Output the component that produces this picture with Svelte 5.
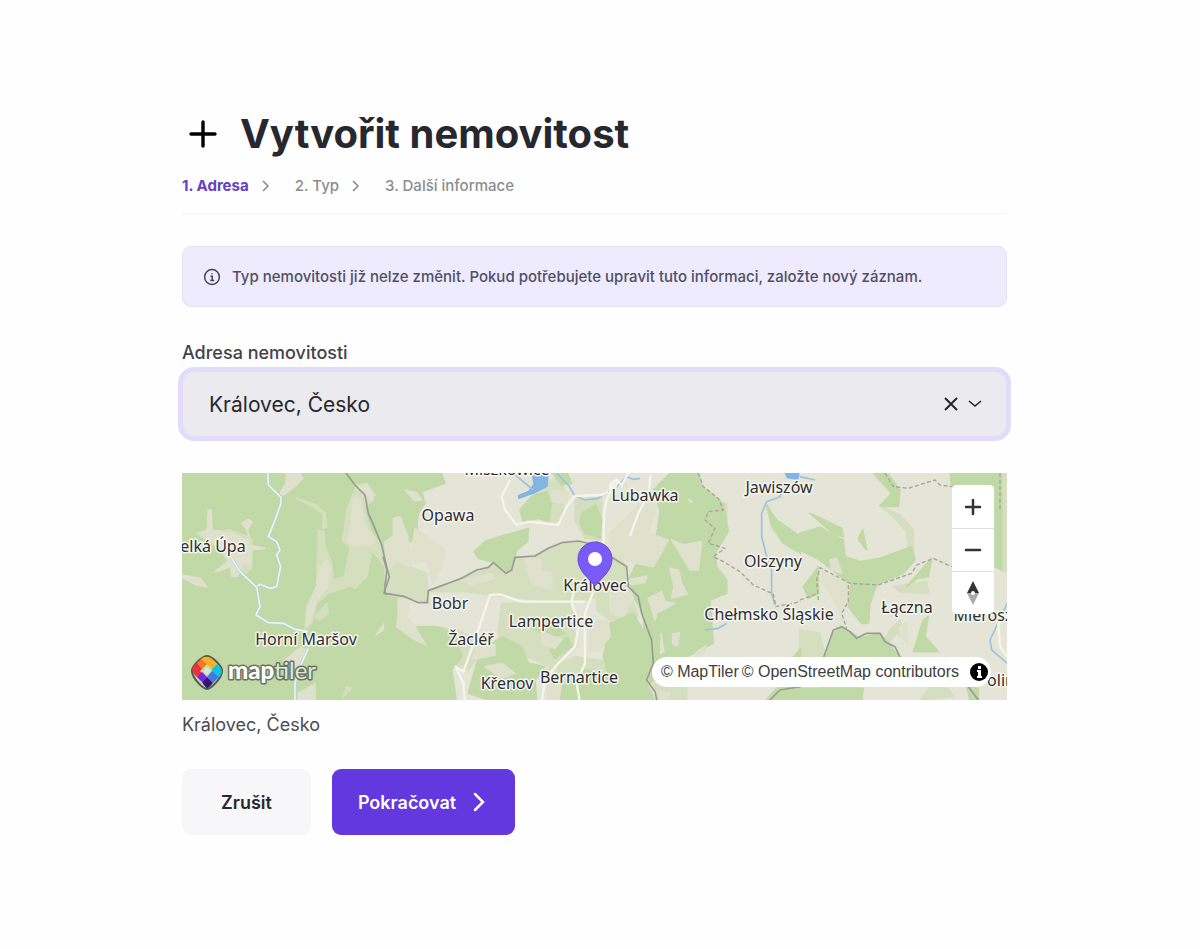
<script lang="ts">
  interface Sheet {
    x: number;
    wood: string[];
    pale: string[];
    clearing: string[];
    water: string[];
    river: string[];
    road: string[];
    border: string[];
    path: string[];
  }

  interface Place {
    name: string;
    x: number;
    y: number;
  }

  let address = $state("Královec, Česko");

  const steps = ["Adresa", "Typ", "Další informace"];
  const current = 0;

  // terrain sheets, drawn at three units to the pixel
  const sheets: Sheet[] = [
    {
      x: -2,
      wood: ["0,0 632,0 632,700 0,700"],
      pale: [
        "530,45 560,40 585,75 575,95 550,110 575,190 600,215 615,290 575,240 560,320 525,355 490,340 510,230 488,215 500,120",
        "70,185 150,180 215,205 215,290 200,310 165,310 120,235 50,190",
        "350,85 410,105 435,130 440,170 428,175 430,130 400,112",
        "415,180 432,185 435,230 455,280 460,330 500,320 520,345 445,370 410,400 395,460 375,480 380,410 410,350",
        "440,400 445,430 420,450 405,440",
        "500,650 490,680 515,655",
      ],
      clearing: [
        "320,9 360,9 368,25 345,50 310,75 300,70 318,40",
        "85,120 93,120 96,180 150,190 205,210 205,225 255,235 215,240 210,290 195,270 170,320 155,318 152,290 105,305 150,270 120,235 60,190 82,180",
        "185,160 205,148 216,155 203,180 208,200 197,175",
        "6,315 60,325 80,350 50,345 6,322",
        "535,48 560,46 580,75 575,92 557,72",
        "510,180 522,85 540,85 555,170 585,205 580,220 525,228 500,215",
        "420,290 440,270 452,300 440,355 405,400 390,455 378,470 384,410 410,350",
        "588,495 615,458 628,470 612,478",
        "310,575 360,533 380,540 350,610 325,600",
        "355,670 405,642 405,690 355,690",
      ],
      water: [],
      river: [
        "263,5 265,45 303,82 303,100 285,150 265,200 290,215 300,240 290,255 302,290 290,350 270,355 240,343 230,350 240,410 228,435 265,458 310,460 345,478 385,485",
        "155,265 180,305 230,352",
        "385,535 360,590 345,640 345,700",
      ],
      road: [],
      border: ["495,5 525,45 555,75 565,130 585,175 605,225 620,290 628,320 612,370 632,373"],
      path: [],
    },
    {
      x: 203,
      wood: [
        "0,0 165,0 180,40 150,50 110,65 120,100 100,130 95,165 105,205 75,215 60,180 45,140 25,150 20,200 0,215",
        "268,245 300,215 345,200 400,185 430,175 428,215 395,240 390,265 370,305 345,290 320,275 280,265",
        "0,378 40,385 35,430 60,440 90,470 150,470 210,490 230,560 200,600 215,700 0,700",
        "405,120 440,80 485,65 500,100 490,155 460,145 415,155",
        "500,5 545,5 560,40 530,45",
        "590,130 632,105 650,150 645,205 600,190 585,160",
        "285,545 350,500 410,530 430,580 480,590 450,630 455,700 340,700 250,670",
        "495,540 550,500 560,530 510,565",
        "530,650 600,600 700,620 700,700 520,700",
        "430,470 500,455 540,490 500,500",
      ],
      pale: [
        "0,215 50,230 75,290 125,310 130,400 0,372",
        "130,365 230,325 325,285 370,310 395,265 450,255 520,225 580,215 690,260 725,300 725,350 690,370 600,390 510,395 315,375 240,365",
        "340,480 350,400 560,400 575,530 500,590 350,530",
        "440,70 480,40 530,20 540,80 530,150 490,160",
        "150,470 220,480 300,530 250,600 220,590 150,540",
        "480,600 570,560 700,580 700,700 500,700",
        "570,90 650,80 650,210 600,205 570,150",
      ],
      clearing: [
        "0,215 30,195 70,215 90,280 125,270 145,340 170,290 180,240 125,200 90,175 75,290 30,270 10,300",
        "25,145 45,140 70,205 45,200 25,190",
        "60,60 95,68 110,90 88,92",
        "40,387 75,398 62,440 90,470 122,525 75,500 35,470 40,430",
        "230,330 320,310 330,325 260,345",
        "420,265 470,270 465,300 500,310 500,360 440,340",
        "300,590 350,580 390,610 350,625",
        "500,60 550,65 545,100 500,95",
        "280,510 330,525 330,555 260,570",
        "470,485 530,510 510,535 470,520",
        "485,610 510,595 530,640 520,700 490,700",
      ],
      water: ["438,5 492,5 488,50 450,70 400,88 398,76 430,62 445,42"],
      river: ["385,10 445,60", "515,9 550,45 570,78 600,90 640,85 670,65"],
      road: [
        "375,30 350,80 360,120 395,165 430,155 520,165 545,110 570,78 650,75 680,60",
        "275,495 315,375 345,373 410,395 560,395 600,395",
        "240,700 235,640 212,590 235,605 275,495",
        "470,700 480,630 520,580 570,530 582,460 560,400 568,350",
        "585,700 575,640 600,580 600,430 625,365",
      ],
      border: [
        "-6,260 6,300 0,345 0,370 60,380 100,398 127,398 130,362 230,325 275,300 310,292 325,278 363,310 380,300 390,262 450,258 490,235 530,218 580,213 632,225",
      ],
      path: [],
    },
    {
      x: 408,
      wood: [
        "190,60 240,10 325,5 335,50 400,100 415,185 375,250 380,290 410,330 410,370 360,390 370,520 290,560 205,620 180,640 165,530 160,430 130,380 110,340 145,270 190,290 235,220 200,200 210,120",
        "530,105 560,150 632,200 632,250 580,220 545,170",
        "60,460 130,430 170,500 190,590 165,630 200,700 80,700 40,560",
        "595,580 632,535 632,570",
        "520,700 560,655 632,650 632,700",
      ],
      pale: [
        "20,370 120,370 145,440 60,450 20,420",
        "390,100 410,100 410,170 380,240 355,200 350,130",
        "45,230 90,262 110,290 100,310 60,270",
        "190,640 290,600 290,700 205,700",
      ],
      clearing: [
        "60,190 175,80 200,110 175,190 235,210 190,290 140,280 90,265 60,250",
        "245,210 280,225 335,215 325,300 300,300 265,240",
        "240,295 265,300 275,340 292,372 245,385 252,350",
        "175,385 215,365 225,395 255,400 200,430 195,450",
        "110,330 170,318 165,338 125,343",
        "60,365 120,350 130,385 100,440 60,430",
        "0,475 25,450 55,455 60,500 25,545 -5,540",
        "213,490 222,545 212,550",
        "248,492 268,488 263,528 248,522",
        "320,545 348,528 343,550 310,570",
        "295,87 308,95 300,96",
        "210,665 240,668 225,700 210,700",
      ],
      water: ["582,5 630,5 625,30 590,25"],
      river: [
        "55,65 80,50 110,20 130,28 150,25",
        "590,45 570,80 530,95 515,130 515,200 530,260 545,300 545,370 555,405",
        "345,480 385,475 410,460",
      ],
      road: [
        "75,30 50,90 42,130 40,230",
        "182,15 175,75 145,130 120,198",
        "60,60 62,40 80,30 95,45 115,9",
        "68,68 85,30",
      ],
      border: ["20,215 65,262 110,290 115,350 145,380 155,430 185,510 190,580 170,630 195,665 203,700", "540,690 570,660 632,650"],
      path: [
        "325,9 340,50 385,85 400,120 355,125 345,150 375,175 355,220 405,235 370,260 400,275 450,305 490,345 550,372 558,410 632,395",
      ],
    },
    {
      x: 618,
      wood: [
        "220,9 265,12 300,60 295,110 240,108 275,70",
        "450,5 605,5 605,300 585,290 585,45 455,50",
        "0,190 60,172 130,210 135,260 180,275 240,265 335,230 345,270 310,310 230,345 210,400 205,460 185,460 145,410 150,340 90,295 60,270 0,240",
        "30,130 125,175 130,200 100,190",
        "10,350 55,290 55,370 25,385",
        "320,350 395,265 385,320 350,325",
        "75,565 100,490 125,470 180,505 240,490 265,520 300,565",
        "370,450 385,440 375,500 415,545 340,545",
        "175,205 188,180 200,240 180,215",
        "0,655 190,655 185,690 0,690",
        "500,650 535,655 535,690 510,690",
      ],
      pale: [
        "605,5 622,5 622,310 605,300",
        "245,110 300,135 340,180 340,240 325,235 320,185 280,140",
        "270,480 300,450 315,510 290,490 265,520 255,510",
        "280,350 380,335 385,370 300,365",
        "0,480 60,490 75,560 0,560",
        "390,650 440,650 460,680 360,690",
        "60,590 180,655 170,690 60,690",
      ],
      clearing: ["90,270 110,265 125,310 95,300", "65,305 148,342 142,395 120,425 92,370 65,335", "300,470 318,458 322,518 302,500"],
      water: [],
      river: ["622,400 570,510 575,540 622,580", "0,20 45,30"],
      road: ["622,430 595,460 600,530 622,560"],
      border: ["70,565 100,480 125,470 150,485 170,505 200,490 240,490 255,515 285,530 302,565", "505,650 535,690"],
      path: [
        "255,9 280,50 325,55 405,30 420,45 455,50",
        "55,390 50,330 60,293 150,340 235,345 335,310 350,285 400,265 455,290",
        "145,345 145,395 125,430 140,475",
        "0,390 55,370",
        "600,10 600,120",
      ],
    },
  ];

  const places: Place[] = [
    { name: "Miszkowice", x: 325, y: 2 },
    { name: "Lubawka", x: 463, y: 28 },
    { name: "Jawiszów", x: 597, y: 20 },
    { name: "Opawa", x: 266, y: 48 },
    { name: "elká Úpa", x: 31, y: 79 },
    { name: "Olszyny", x: 591, y: 94 },
    { name: "Královec", x: 413, y: 118 },
    { name: "Bobr", x: 268, y: 136 },
    { name: "Chełmsko Śląskie", x: 587, y: 147 },
    { name: "Łączna", x: 725, y: 140 },
    { name: "Mieroszów", x: 812, y: 148 },
    { name: "Lampertice", x: 369, y: 154 },
    { name: "Horní Maršov", x: 124, y: 172 },
    { name: "Žacléř", x: 289, y: 172 },
    { name: "Bernartice", x: 397, y: 210 },
    { name: "Křenov", x: 325, y: 216 },
    { name: "olin", x: 819, y: 213 },
  ];
</script>

<main class="page">
  <header class="heading">
    <svg class="plus" viewBox="0 0 42 42" aria-hidden="true">
      <path d="M21 9v24M9 21h24" />
    </svg>
    <h1>Vytvořit nemovitost</h1>
  </header>

  <ol class="steps">
    {#each steps as step, i (step)}
      <li class:active={i === current}>
        {i + 1}. {step}
        {#if i < steps.length - 1}
          <svg class="step-arrow" viewBox="0 0 10 12" aria-hidden="true"><path d="M2 1l5 5-5 5" /></svg>
        {/if}
      </li>
    {/each}
  </ol>

  <div class="notice" role="note">
    <svg viewBox="0 0 18 18" aria-hidden="true">
      <circle cx="9" cy="9" r="7.4" />
      <path d="M7.5 8.2h1.7v4.1M7.2 12.4h4M9 5.2v1" />
    </svg>
    <p>Typ nemovitosti již nelze změnit. Pokud potřebujete upravit tuto informaci, založte nový záznam.</p>
  </div>

  <label for="address">Adresa nemovitosti</label>
  <div class="select-wrap">
    <select id="address" bind:value={address}>
      <option value="Královec, Česko">Královec, Česko</option>
      <option value=""></option>
    </select>
    <button type="button" class="clear" aria-label="Vymazat" onclick={() => (address = "")}>
      <svg viewBox="0 0 16 16" aria-hidden="true"><path d="M2 2l12 12M14 2L2 14" /></svg>
    </button>
    <svg class="chevron" viewBox="0 0 14 10" aria-hidden="true"><path d="M1 2l6 5 6-5" /></svg>
  </div>

  <div class="map">
    <svg class="terrain" viewBox="0 0 825 227" preserveAspectRatio="xMidYMid slice">
      {#each sheets as s (s.x)}
        <g transform="translate({s.x} -3) scale(0.3333)">
          {#if s.x < 0}
            {#each s.wood as points}<polygon class="wood" {points} />{/each}
          {/if}
          {#each s.pale as points}<polygon class="pale" {points} />{/each}
        </g>
      {/each}
      {#each sheets as s (s.x)}
        <g transform="translate({s.x} -3) scale(0.3333)">
          {#if s.x > 0}
            {#each s.wood as points}<polygon class="wood" {points} />{/each}
          {/if}
          {#each s.clearing as points}<polygon class="clearing" {points} />{/each}
          {#each s.water as points}<polygon class="water" {points} />{/each}
        </g>
      {/each}
      {#each sheets as s (s.x)}
        <g transform="translate({s.x} -3) scale(0.3333)">
          {#each s.river as points}
            {#if s.x < 0}<polyline class="bank" {points} />{/if}
            <polyline class="river" class:light={s.x < 0} {points} />
          {/each}
          {#each s.road as points}<polyline class="road" {points} />{/each}
          {#each s.path as points}<polyline class="path" {points} />{/each}
          {#each s.border as points}<polyline class="border" {points} />{/each}
        </g>
      {/each}
      {#each places as p (p.name)}
        <text class="place" x={p.x} y={p.y} text-anchor="middle">{p.name}</text>
      {/each}
      <path class="pin" d="M396 86a17 17 0 0 1 34 0c0 6-3 11-6 15l-11 12-11-12c-3-4-6-9-6-15z" />
      <circle cx="413" cy="86" r="7" fill="#fff" />
    </svg>

    <a class="logo" href="#maptiler" aria-label="MapTiler">
      <svg viewBox="0 0 130 40">
        <path class="logo-edge" d="M17 3C21 3 32 12 32 18C32 25 21 36 17 36C13 36 2 25 2 18C2 12 13 3 17 3Z" />
        <path fill="#fbb01e" d="M11 6C15 3 18 3 22 6L27 11L22 16L17 11Z" />
        <path fill="#f9761c" d="M11 6L17 11L12 16L7 10Z" />
        <path fill="#ee2f3c" d="M7 10L12 16L10 18L12 20L7 24C2 20 1 16 4 12Z" />
        <path fill="#12c3da" d="M27 11C33 16 33 20 29 24L22 18L22 16Z" />
        <path fill="#3f78e8" d="M22 18L29 24L23 30L17 24Z" />
        <path fill="#7a22ea" d="M7 24L12 19L17 24L12 29Z" />
        <path fill="#35157d" d="M12 29L17 24L23 30C17 37 17 37 12 29Z" />
        <path fill="#dce7d2" d="M17 14L21 18L17 22L13 18Z" />
        <text x="38" y="26"><tspan class="bold">map</tspan><tspan class="thin">tiler</tspan></text>
      </svg>
    </a>

    <div class="controls">
      <button type="button" aria-label="Přiblížit">
        <svg viewBox="0 0 20 20"><path d="M10 3v14M3 10h14" /></svg>
      </button>
      <button type="button" aria-label="Oddálit">
        <svg viewBox="0 0 20 20"><path d="M3 10h14" /></svg>
      </button>
      <button type="button" aria-label="Sever nahoru">
        <svg class="compass" viewBox="0 0 14 24">
          <path fill="#333" d="M7 0l6 12H9a2 2 0 0 0-4 0H1z" />
          <path fill="#aaa" d="M1 12h4a2 2 0 0 0 4 0h4L7 24z" />
        </svg>
      </button>
    </div>

    <div class="attribution">
      <a href="#copyright">© MapTiler</a>
      <a href="#osm">© OpenStreetMap contributors</a>
      <svg viewBox="0 0 20 20" aria-hidden="true">
        <circle cx="10" cy="10" r="9" />
        <path fill="#fff" d="M9 4h3v3H9zM8 8h4v6h1v2H8v-2h1v-4H8z" />
      </svg>
    </div>
  </div>
  <p class="caption">Královec, Česko</p>

  <div class="actions">
    <button type="button" class="cancel">Zrušit</button>
    <button type="button" class="next">
      Pokračovat
      <svg viewBox="0 0 14 20" aria-hidden="true"><path d="M3 2l8 8-8 8" /></svg>
    </button>
  </div>
</main>

<style>
  :global(body) {
    background: #fefefe;
  }

  .page {
    padding: 108px 193px 64px 182px;
    font-family: Inter, "Noto Sans", sans-serif;
    color: #27272f;
  }

  button {
    font-family: inherit;
    border: none;
    padding: 0;
    cursor: pointer;
  }

  svg {
    flex-shrink: 0;
    fill: none;
  }

  .heading {
    display: flex;
    align-items: center;
    gap: 16px;
  }

  .plus {
    width: 42px;
    height: 42px;
    stroke: #000;
    stroke-width: 3.4;
    stroke-linecap: round;
  }

  h1 {
    margin: 0;
    font-size: 40px;
    line-height: 52px;
    font-weight: 700;
  }

  .steps {
    display: flex;
    gap: 24px;
    margin: 14px 0 32px;
    padding: 0 0 15px;
    list-style: none;
    border-bottom: 1px solid #f4f4f6;
    font-size: 15px;
    line-height: 24px;
    font-weight: 500;
    color: #8c8c91;
  }

  .steps li {
    display: flex;
    align-items: center;
    gap: 12px;
  }

  .steps .active {
    color: #6540c8;
    font-weight: 700;
  }

  .step-arrow {
    width: 10px;
    height: 12px;
    stroke: #88888d;
    stroke-width: 1.5;
  }

  .notice {
    display: flex;
    align-items: center;
    gap: 11px;
    padding: 17px 20px;
    border: 1px solid #e4e1f0;
    border-radius: 9px;
    background: #eeebfe;
    color: #514e64;
    font-size: 15px;
    line-height: 25px;
    font-weight: 500;
  }

  .notice p {
    margin: 0;
  }

  .notice svg {
    width: 18px;
    height: 18px;
    stroke: #46435a;
    stroke-width: 1.5;
  }

  label {
    display: block;
    margin: 34px 0 6px;
    font-size: 18px;
    line-height: 24px;
    font-weight: 500;
    color: #424248;
  }

  .select-wrap {
    position: relative;
  }

  select {
    display: block;
    width: 100%;
    height: 66px;
    padding: 0 80px 0 26px;
    appearance: none;
    border: 1px solid #e2dcf8;
    border-radius: 12px;
    outline: none;
    box-shadow: 0 0 0 4px #e2dcfa;
    background: #ebeaef;
    font-family: inherit;
    font-size: 21px;
    color: #27272f;
  }

  .clear {
    position: absolute;
    top: 25px;
    right: 48px;
    width: 16px;
    height: 16px;
    background: transparent;
  }

  .clear svg {
    display: block;
    stroke: #27272f;
    stroke-width: 2;
  }

  .chevron {
    position: absolute;
    top: 28px;
    right: 25px;
    width: 14px;
    height: 10px;
    stroke: #27272f;
    stroke-width: 1.6;
    pointer-events: none;
  }

  .map {
    position: relative;
    height: 227px;
    margin-top: 36px;
    overflow: hidden;
    background: #e4e4d7;
  }

  .terrain {
    display: block;
    width: 100%;
    height: 100%;
  }

  polygon {
    stroke-width: 5;
    stroke-linejoin: round;
  }

  .wood {
    fill: #c1d9a7;
    stroke: #c1d9a7;
  }

  .pale {
    fill: #d5dfbf;
    stroke: #d5dfbf;
  }

  .clearing {
    fill: #dfe1cd;
    stroke: #dfe1cd;
  }

  .water {
    fill: #82b5e4;
  }

  .river {
    stroke: #9bc3df;
    stroke-width: 5;
  }

  .river.light {
    stroke: #eaf6f1;
    stroke-width: 5;
  }

  .bank {
    stroke: #b5d3cf;
    stroke-width: 9;
  }

  .road {
    stroke: #f5f5ec;
    stroke-width: 7;
  }

  .border {
    stroke: #989d92;
    stroke-width: 5;
  }

  .path {
    stroke: #a3a69a;
    stroke-width: 4;
    stroke-dasharray: 12 7;
  }

  polyline {
    fill: none;
    stroke-linejoin: round;
  }

  .place {
    font-family: "Noto Sans", sans-serif;
    font-size: 16px;
    fill: #2d2d33;
    stroke: #f6f6ee;
    stroke-width: 3;
    stroke-linejoin: round;
    paint-order: stroke;
  }

  .pin {
    fill: #7b5bf8;
    stroke: #6848d8;
  }

  .logo {
    position: absolute;
    left: 8px;
    bottom: 7px;
    width: 130px;
    height: 40px;
  }

  .logo-edge {
    stroke: #55594d;
    stroke-width: 2;
  }

  .logo text {
    font-family: Lato, sans-serif;
    font-size: 24px;
    fill: #fff;
    stroke: #6b7061;
    stroke-width: 3;
    stroke-linejoin: round;
    paint-order: stroke;
  }

  .bold {
    font-weight: 900;
  }

  .thin {
    font-weight: 400;
    fill: #dfe8d2;
  }

  .controls {
    position: absolute;
    top: 12px;
    right: 13px;
    width: 42px;
    border-radius: 5px;
    overflow: hidden;
    background: #fff;
  }

  .controls button {
    display: flex;
    align-items: center;
    justify-content: center;
    width: 100%;
    height: 43px;
    background: #fff;
  }

  .controls button + button {
    border-top: 1px solid #ddd;
  }

  .controls svg {
    width: 20px;
    height: 20px;
    stroke: #333;
    stroke-width: 2.5;
    stroke-linecap: round;
  }

  .controls .compass {
    width: 14px;
    height: 24px;
    stroke: none;
  }

  .attribution {
    position: absolute;
    right: 16px;
    bottom: 13px;
    display: flex;
    align-items: center;
    gap: 3px;
    padding: 0 2px 0 9px;
    border-radius: 15px;
    background: #fff;
    font-family: "Liberation Sans", sans-serif;
    font-size: 16px;
    line-height: 30px;
  }

  .attribution a {
    color: #404040;
    text-decoration: none;
  }

  .attribution svg {
    width: 20px;
    height: 20px;
    margin-left: 7px;
  }

  .attribution circle {
    fill: #000;
  }

  .caption {
    margin: 13px 0 32px;
    font-size: 18px;
    line-height: 24px;
    color: #4b4b52;
  }

  .actions {
    display: flex;
    gap: 21px;
  }

  .actions button {
    display: flex;
    align-items: center;
    gap: 16px;
    height: 66px;
    border-radius: 9px;
    font-size: 18px;
    font-weight: 600;
  }

  .cancel {
    padding: 0 39px;
    background: #f7f7fa;
    color: #27272f;
  }

  .next {
    padding: 0 29px 0 26px;
    background: #6438df;
    color: #fff;
  }

  .next svg {
    width: 14px;
    height: 20px;
    stroke: #fff;
    stroke-width: 2.5;
    stroke-linecap: round;
  }
</style>
